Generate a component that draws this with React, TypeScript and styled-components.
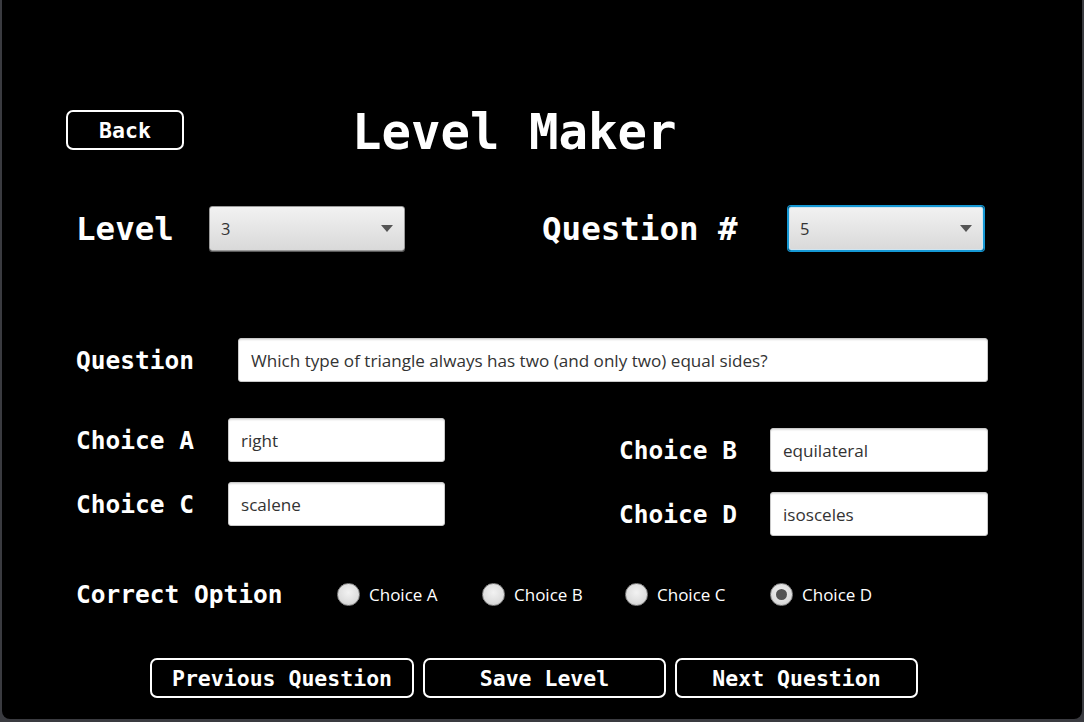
import React from "react";
import styled, { createGlobalStyle } from "styled-components";

const Global = createGlobalStyle`
  html, body { margin: 0; padding: 0; background: #3a3b40; }
  body { width: 1084px; height: 722px; overflow: hidden; }
`;

const mono = `"DejaVu Sans Mono", "Liberation Mono", monospace`;
const ui = `"Open Sans", "Noto Sans", sans-serif`;

const Window = styled.div`
  margin-left: 2px;
  width: 1080px;
  height: 719px;
  background: #000;
  border-radius: 0 0 8px 8px;
  box-sizing: border-box;
  padding-top: 105px;
  display: flex;
  flex-direction: column;
  color: #fff;
`;

const Header = styled.div`
  display: flex;
  align-items: center;
  height: 50px;
  padding-left: 64px;
`;

const OutlineButton = styled.button<{ $w: number }>`
  width: ${(p) => p.$w}px;
  height: 40px;
  box-sizing: border-box;
  border: 2px solid #fff;
  border-radius: 7px;
  background: #000;
  color: #fff;
  font-family: ${mono};
  font-weight: bold;
  font-size: 21.5px;
  padding: 0;
  display: flex;
  align-items: center;
  justify-content: center;
`;

const Title = styled.h1`
  margin: 0 0 0 168px;
  font-family: ${mono};
  font-weight: bold;
  font-size: 49px;
  line-height: 50px;
  position: relative;
  top: 3px;
`;

const Row = styled.div<{ $top: number; $h: number }>`
  display: flex;
  align-items: center;
  margin-top: ${(p) => p.$top}px;
  height: ${(p) => p.$h}px;
  padding-left: 74px;
`;

const BigLabel = styled.div<{ $w: number; $ml?: number }>`
  width: ${(p) => p.$w}px;
  margin-left: ${(p) => p.$ml ?? 0}px;
  flex: none;
  font-family: ${mono};
  font-weight: bold;
  font-size: 32.5px;
`;

const Label = styled.div<{ $w: number }>`
  width: ${(p) => p.$w}px;
  flex: none;
  font-family: ${mono};
  font-weight: bold;
  font-size: 24.5px;
`;

const Combo = styled.div<{ $focused?: boolean }>`
  width: 196px;
  height: 45px;
  box-sizing: border-box;
  flex: none;
  border-radius: 3px;
  border: 1px solid ${(p) => (p.$focused ? "#1598d4" : "#9a9a9a")};
  box-shadow: ${(p) => (p.$focused ? "0 0 0 1px #1598d4, inset 0 0 0 1px #cfe6f3" : "0 1px 0 #5a5a5a")};
  background: linear-gradient(#f2f2f2, #d9d9d9);
  display: flex;
  align-items: center;
  justify-content: space-between;
  padding: 0 11px 0 11px;
  font-family: ${ui};
  font-size: 16.5px;
  color: #333;
`;

const Arrow = styled.span`
  width: 0;
  height: 0;
  border-left: 6px solid transparent;
  border-right: 6px solid transparent;
  border-top: 7px solid #555;
`;

const TextField = styled.div<{ $w: number }>`
  width: ${(p) => p.$w}px;
  height: 44px;
  box-sizing: border-box;
  flex: none;
  background: #fff;
  border: 1px solid #c9c9c9;
  border-radius: 3px;
  box-shadow: inset 0 2px 2px -1px #dcdcdc;
  display: flex;
  align-items: center;
  padding-left: 12px;
  font-family: ${ui};
  font-size: 17.1px;
  color: #333;
  white-space: nowrap;
`;

const Choices = styled.div`
  display: flex;
  margin-top: 36px;
  padding-left: 74px;
`;

const ChoiceCol = styled.div<{ $offset: number; $w: number }>`
  display: flex;
  flex-direction: column;
  gap: 20px;
  margin-top: ${(p) => p.$offset}px;
  width: ${(p) => p.$w}px;
`;

const ChoiceRow = styled.div`
  display: flex;
  align-items: center;
  height: 44px;
`;

const RadioGroup = styled.div`
  display: flex;
  align-items: center;
`;

const RadioItem = styled.label<{ $w: number }>`
  display: flex;
  align-items: center;
  gap: 9px;
  width: ${(p) => p.$w}px;
  flex: none;
  font-family: ${ui};
  font-size: 17px;
  color: #fff;
`;

const RadioDot = styled.span<{ $on?: boolean }>`
  width: 23px;
  height: 23px;
  box-sizing: border-box;
  border-radius: 50%;
  border: 1px solid #8a8a8a;
  background: radial-gradient(circle at 50% 40%, #f2f2f2 0%, #dedede 60%, #c4c4c4 100%);
  display: flex;
  align-items: center;
  justify-content: center;
  &::after {
    content: "";
    display: ${(p) => (p.$on ? "block" : "none")};
    width: 11px;
    height: 11px;
    border-radius: 50%;
    background: #555;
  }
`;

const Footer = styled.div`
  display: flex;
  gap: 9px;
  margin-top: 49px;
  padding-left: 148px;
`;

const radios = ["Choice A", "Choice B", "Choice C", "Choice D"];
const radioWidths = [145, 143, 145, 120];

export default function App() {
  return (
    <>
      <Global />
      <Window>
        <Header>
          <OutlineButton $w={118}>Back</OutlineButton>
          <Title>Level Maker</Title>
        </Header>

        <Row $top={51} $h={45}>
          <BigLabel $w={133}>Level</BigLabel>
          <Combo>
            <span>3</span>
            <Arrow />
          </Combo>
          <BigLabel $w={246} $ml={137}>Question #</BigLabel>
          <Combo $focused>
            <span>5</span>
            <Arrow />
          </Combo>
        </Row>

        <Row $top={87} $h={44}>
          <Label $w={162}>Question</Label>
          <TextField $w={750}>
            Which type of triangle always has two (and only two) equal sides?
          </TextField>
        </Row>

        <Choices>
          <ChoiceCol $offset={0} $w={543}>
            <ChoiceRow>
              <Label $w={152}>Choice A</Label>
              <TextField $w={217}>right</TextField>
            </ChoiceRow>
            <ChoiceRow>
              <Label $w={152}>Choice C</Label>
              <TextField $w={217}>scalene</TextField>
            </ChoiceRow>
          </ChoiceCol>
          <ChoiceCol $offset={10} $w={370}>
            <ChoiceRow>
              <Label $w={151}>Choice B</Label>
              <TextField $w={218}>equilateral</TextField>
            </ChoiceRow>
            <ChoiceRow>
              <Label $w={151}>Choice D</Label>
              <TextField $w={218}>isosceles</TextField>
            </ChoiceRow>
          </ChoiceCol>
        </Choices>

        <Row $top={43} $h={30}>
          <Label $w={261}>Correct Option</Label>
          <RadioGroup>
            {radios.map((r, i) => (
              <RadioItem key={r} $w={radioWidths[i]}>
                <RadioDot $on={i === 3} />
                {r}
              </RadioItem>
            ))}
          </RadioGroup>
        </Row>

        <Footer>
          <OutlineButton $w={264}>Previous Question</OutlineButton>
          <OutlineButton $w={243}>Save Level</OutlineButton>
          <OutlineButton $w={243}>Next Question</OutlineButton>
        </Footer>
      </Window>
    </>
  );
}
